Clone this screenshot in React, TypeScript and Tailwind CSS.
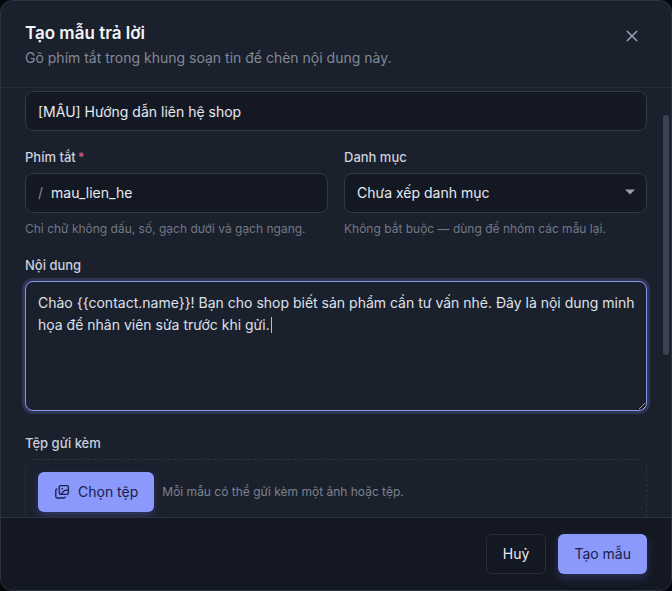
import { useEffect, useRef, useState, type ReactNode } from "react";

const CATEGORIES = ["Chưa xếp danh mục", "Chăm sóc khách hàng", "Bán hàng"];

const inputClass =
  "h-10 w-full rounded-lg border border-[#333947] bg-[#141822] px-3 text-sm text-[#e8eaf2] outline-none";

function CloseIcon() {
  return (
    <svg width="12" height="12" viewBox="0 0 12 12" fill="none" stroke="currentColor" strokeWidth="1.4" strokeLinecap="round">
      <path d="M1.2 1.2l9.6 9.6M10.8 1.2l-9.6 9.6" />
    </svg>
  );
}

function LibraryIcon() {
  return (
    <svg width="16" height="16" viewBox="0 0 16 16" fill="none" stroke="currentColor" strokeWidth="1.3" strokeLinecap="round" strokeLinejoin="round">
      <rect x="5.2" y="1.600" width="9.200" height="8.800" rx="1.300" />
      <path d="M2.900 4.900C2.200 5.100 1.800 5.500 1.800 6.300v6.100c0 1 .6 1.600 1.600 1.600h6.300c.8 0 1.300-.3 1.500-1" />
      <path d="M7 10.200l3.200-3.600 4 -.8" />
      <circle cx="8.200" cy="4.600" r="0.900" fill="currentColor" stroke="none" />
    </svg>
  );
}

function Label({ htmlFor, children }: { htmlFor: string; children: ReactNode }) {
  return (
    <label htmlFor={htmlFor} className="mb-1.5 block text-[13px] leading-5 font-medium text-[#ccd0de]">
      {children}
    </label>
  );
}

export default function App() {
  const [title, setTitle] = useState("[MẪU] Hướng dẫn liên hệ shop");
  const [shortcut, setShortcut] = useState("mau_lien_he");
  const [category, setCategory] = useState(CATEGORIES[0]);
  const [content, setContent] = useState(
    "Chào {{contact.name}}! Bạn cho shop biết sản phẩm cần tư vấn nhé. Đây là nội dung minh họa để nhân viên sửa trước khi gửi."
  );
  const contentRef = useRef<HTMLTextAreaElement>(null);

  // Start with the cursor after the last word
  useEffect(() => {
    const el = contentRef.current;
    if (!el) return;
    el.focus();
    el.setSelectionRange(el.value.length, el.value.length);
  }, []);

  return (
    <div className="h-screen bg-[#05070d] font-['Inter','Liberation_Sans',sans-serif] antialiased">
      <form
        role="dialog"
        aria-labelledby="dialog-title"
        onSubmit={(e) => e.preventDefault()}
        className="flex h-full flex-col overflow-hidden rounded-xl border border-[#2c323f] bg-[#1a202c]"
      >
        <header className="flex shrink-0 items-start justify-between border-b border-[#262c38] px-6 pt-5 pb-4">
          <div>
            <h2 id="dialog-title" className="text-[17px] leading-6 font-semibold text-[#f4f5fb]">
              Tạo mẫu trả lời
            </h2>
            <p className="text-sm leading-[26px] text-[#838997]">Gõ phím tắt trong khung soạn tin để chèn nội dung này.</p>
          </div>
          <button type="button" aria-label="Đóng" className="flex size-[30px] items-center justify-center text-[#a0a6b6]">
            <CloseIcon />
          </button>
        </header>

        <div className="relative min-h-0 flex-1">
          <div className="flex h-full flex-col gap-4 overflow-hidden px-6 pt-[3px]">
            <input
              aria-label="Tiêu đề"
              value={title}
              onChange={(e) => setTitle(e.target.value)}
              className={`${inputClass} shrink-0`}
            />

            <div className="grid grid-cols-2 gap-4">
              <div>
                <Label htmlFor="shortcut">
                  Phím tắt<span className="ml-0.5 text-[#e0566f]">*</span>
                </Label>
                <div className="flex h-10 items-center gap-2 rounded-lg border border-[#333947] bg-[#141822] px-3 text-sm">
                  <span className="text-[#838997]">/</span>
                  <input
                    id="shortcut"
                    value={shortcut}
                    onChange={(e) => setShortcut(e.target.value)}
                    className="min-w-0 flex-1 text-[#e8eaf2] outline-none"
                  />
                </div>
                <p className="mt-1.5 text-xs leading-5 text-[#737987]">Chỉ chữ không dấu, số, gạch dưới và gạch ngang.</p>
              </div>

              <div>
                <Label htmlFor="category">Danh mục</Label>
                <div className="relative">
                  <select
                    id="category"
                    value={category}
                    onChange={(e) => setCategory(e.target.value)}
                    className={`${inputClass} appearance-none`}
                  >
                    {CATEGORIES.map((name) => (
                      <option key={name}>{name}</option>
                    ))}
                  </select>
                  <svg className="pointer-events-none absolute top-4 right-3 text-[#9a9fae]" width="10" height="6" viewBox="0 0 10 6" fill="currentColor">
                    <path d="M0 0.500h10L5 5.500z" />
                  </svg>
                </div>
                <p className="mt-1.5 text-xs leading-5 text-[#737987]">Không bắt buộc — dùng để nhóm các mẫu lại.</p>
              </div>
            </div>

            <div className="pb-1.5">
              <Label htmlFor="content">Nội dung</Label>
              <div className="relative">
                <textarea
                  id="content"
                  ref={contentRef}
                  value={content}
                  onChange={(e) => setContent(e.target.value)}
                  className="block h-[130px] w-full resize-y rounded-lg border border-[#8b93f0] bg-[#1a202c] py-2.5 pr-1 pl-3 text-sm leading-[22px] text-[#dfe2ec] caret-transparent ring-3 ring-[#2e3655] outline-none"
                />
                <span className="pointer-events-none absolute top-9 left-[246px] h-4 w-px bg-[#b8bccb]" />
              </div>
            </div>

            <div>
              <Label htmlFor="attach">Tệp gửi kèm</Label>
              <div className="flex h-24 items-start gap-2 rounded-lg border border-dashed border-[#2c323f] p-3">
                <button
                  id="attach"
                  type="button"
                  className="flex h-10 items-center gap-2 rounded-md bg-[#8b98fc] px-4 text-sm text-[#1a2047] shadow-[0_4px_10px_rgba(100,110,230,0.3)]"
                >
                  <LibraryIcon />
                  Chọn tệp
                </button>
                <p className="text-xs leading-10 text-[#7d8391]">Mỗi mẫu có thể gửi kèm một ảnh hoặc tệp.</p>
              </div>
            </div>
          </div>

          {/* Scroll thumb */}
          <div className="absolute top-[27px] right-0.5 h-60 w-1.5 rounded-full bg-[#3b4254]" />
        </div>

        <footer className="flex shrink-0 justify-end gap-3 border-t border-[#2c323f] bg-[#141822] px-6 py-4">
          <button type="button" className="h-10 rounded-md border border-[#2a2f3b] px-4 text-sm text-[#e8eaf2]">
            Huỷ
          </button>
          <button
            type="submit"
            className="h-10 rounded-md bg-[#8b98fc] px-4 text-sm text-[#1a2047] shadow-[0_4px_10px_rgba(100,110,230,0.3)]"
          >
            Tạo mẫu
          </button>
        </footer>
      </form>
    </div>
  );
}
